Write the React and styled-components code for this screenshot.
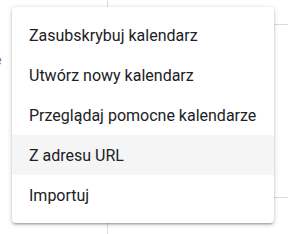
import React from "react";
import styled, { createGlobalStyle } from "styled-components";

const Global = createGlobalStyle`
  html, body { margin: 0; padding: 0; background: #fff; }
  body { font-family: Roboto, "Noto Sans", Arial, sans-serif; }
`;

const Page = styled.div`
  position: relative;
  width: 288px;
  height: 234px;
  overflow: hidden;
  display: grid;
  grid-template-columns: 108px 1fr;
`;

const Sidebar = styled.div`
  border-right: 1px solid #dadce0;
  position: relative;
`;

const Fragment = styled.span`
  position: absolute;
  left: -6px;
  top: 52px;
  font-size: 14px;
  color: #5f6368;
`;

const Grid = styled.div`
  display: grid;
  grid-template-rows: 25px 173px 1fr;
`;

const Cell = styled.div`
  border-bottom: ${(p) => (p.$line ? "1px solid #dadce0" : "none")};
`;

const Menu = styled.ul`
  position: absolute;
  left: 12px;
  top: 7px;
  width: 262px;
  margin: 0;
  padding: 8px 0;
  list-style: none;
  background: #fff;
  border-radius: 4px;
  box-shadow: 0 2px 2px 0 rgba(0,0,0,0.14), 0 3px 1px -2px rgba(0,0,0,0.12), 0 1px 5px 0 rgba(0,0,0,0.2);
`;

const Item = styled.li`
  height: 40px;
  display: flex;
  align-items: center;
  padding: 0 16px 0 17px;
  font-size: 16px;
  color: #202124;
  background: ${(p) => (p.$active ? "#f5f5f5" : "transparent")};
  white-space: nowrap;
`;

const items = [
  "Zasubskrybuj kalendarz",
  "Utwórz nowy kalendarz",
  "Przeglądaj pomocne kalendarze",
  "Z adresu URL",
  "Importuj",
];

export default function App() {
  return (
    <>
      <Global />
      <Page>
        <Sidebar>
          <Fragment>e</Fragment>
        </Sidebar>
        <Grid>
          <Cell $line />
          <Cell $line />
          <Cell />
        </Grid>
        <Menu>
          {items.map((t, i) => (
            <Item key={t} $active={i === 3}>
              {t}
            </Item>
          ))}
        </Menu>
      </Page>
    </>
  );
}
